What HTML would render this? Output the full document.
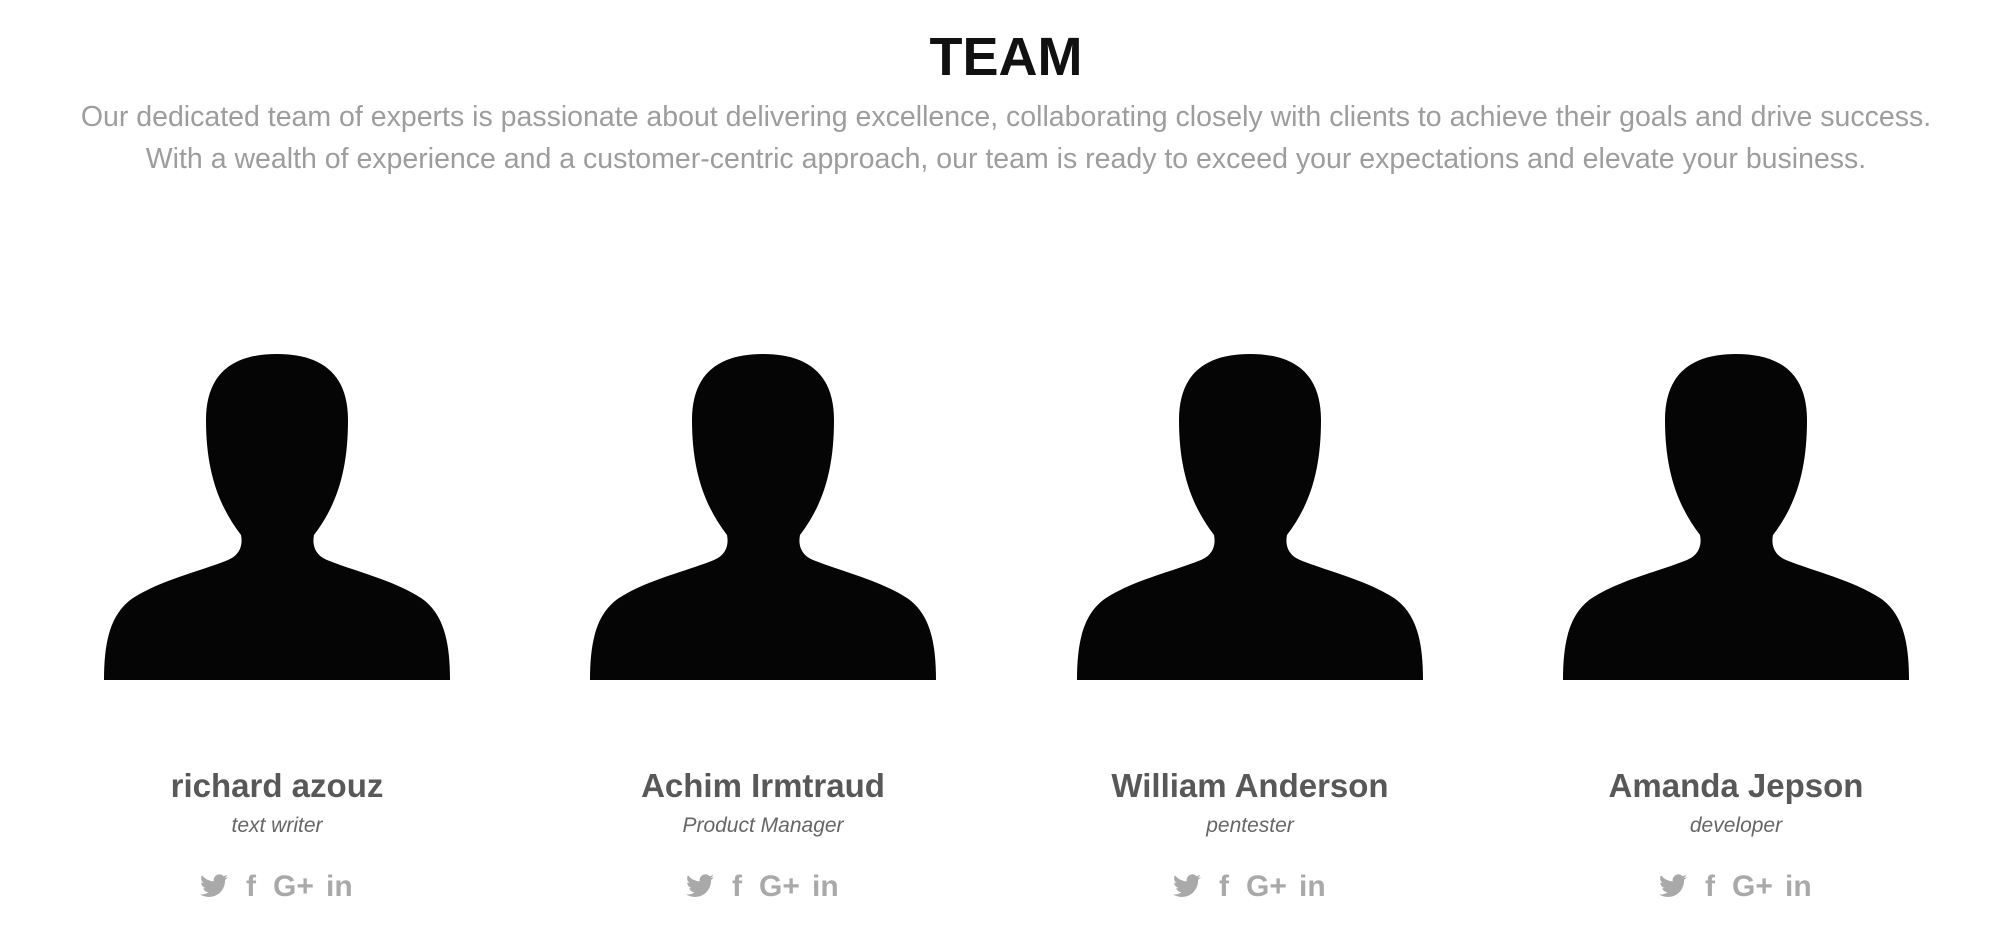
<!DOCTYPE html>
<html><head><meta charset="utf-8"><style>
html,body{margin:0;padding:0;background:#fff;width:2000px;height:946px;overflow:hidden;font-family:"Liberation Sans",sans-serif}
h1{position:absolute;top:26px;left:0;width:2012px;text-align:center;margin:0;font-size:54px;font-weight:bold;color:#111}
.p{position:absolute;top:96px;left:0;width:2012px;text-align:center;color:#9d9d9d;font-size:28.5px;line-height:42px;margin:0}
.col{position:absolute;top:330px;width:400px;text-align:center}
.col svg{display:block}
.name{position:absolute;top:437px;width:400px;text-align:center;font-weight:bold;font-size:33px;color:#585858}
.role{position:absolute;top:484px;width:400px;text-align:center;font-style:italic;font-size:21px;color:#666}
.ic{position:absolute;top:538px;left:0;width:400px;height:38px}
.ic span{position:absolute;color:#a9a9a9;font-weight:bold;font-size:30px;line-height:38px}
</style></head><body>
<h1>TEAM</h1>
<p class="p">Our dedicated team of experts is passionate about delivering excellence, collaborating closely with clients to achieve their goals and drive success.<br>With a wealth of experience and a customer-centric approach, our team is ready to exceed your expectations and elevate your business.</p>

<div class="col" style="left:77px">
<svg width="400" height="360" viewBox="0 0 400 360"><path fill="#050505" d="M200,24 C160,24 129,40 129,90 C129,140 141,175 164,205 C166,215 163,225 151,230 C121,242 84,250 56,268 C34,283 27,310 27,350 L373,350 C373,310 366,283 344,268 C316,250 280,242 250,230 C238,225 235,215 237,205 C260,175 271,140 271,90 C271,40 240,24 200,24 Z"/></svg>
<div class="name">richard azouz</div><div class="role">text writer</div>
<div class="ic"><svg style="position:absolute;left:123px;top:6px" width="28" height="24" viewBox="0 0 24 20"><path fill="#a9a9a9" d="M24 2.4a10 10 0 0 1-2.8.8A5 5 0 0 0 23.3.4a10 10 0 0 1-3.1 1.2A4.9 4.9 0 0 0 11.8 6 14 14 0 0 1 1.7.9a4.9 4.9 0 0 0 1.5 6.6A4.9 4.9 0 0 1 1 6.9a4.9 4.9 0 0 0 3.9 4.8 5 5 0 0 1-2.2.1 4.9 4.9 0 0 0 4.6 3.4A9.9 9.9 0 0 1 0 17.2 14 14 0 0 0 7.5 19.4c9.1 0 14-7.5 14-14v-.6A10 10 0 0 0 24 2.4z"/></svg><span style="left:169px">f</span><span style="left:196px">G+</span><span style="left:249px">in</span></div>
</div>

<div class="col" style="left:563px">
<svg width="400" height="360" viewBox="0 0 400 360"><path fill="#050505" d="M200,24 C160,24 129,40 129,90 C129,140 141,175 164,205 C166,215 163,225 151,230 C121,242 84,250 56,268 C34,283 27,310 27,350 L373,350 C373,310 366,283 344,268 C316,250 280,242 250,230 C238,225 235,215 237,205 C260,175 271,140 271,90 C271,40 240,24 200,24 Z"/></svg>
<div class="name">Achim Irmtraud</div><div class="role">Product Manager</div>
<div class="ic"><svg style="position:absolute;left:123px;top:6px" width="28" height="24" viewBox="0 0 24 20"><path fill="#a9a9a9" d="M24 2.4a10 10 0 0 1-2.8.8A5 5 0 0 0 23.3.4a10 10 0 0 1-3.1 1.2A4.9 4.9 0 0 0 11.8 6 14 14 0 0 1 1.7.9a4.9 4.9 0 0 0 1.5 6.6A4.9 4.9 0 0 1 1 6.9a4.9 4.9 0 0 0 3.9 4.8 5 5 0 0 1-2.2.1 4.9 4.9 0 0 0 4.6 3.4A9.9 9.9 0 0 1 0 17.2 14 14 0 0 0 7.5 19.4c9.1 0 14-7.5 14-14v-.6A10 10 0 0 0 24 2.4z"/></svg><span style="left:169px">f</span><span style="left:196px">G+</span><span style="left:249px">in</span></div>
</div>

<div class="col" style="left:1050px">
<svg width="400" height="360" viewBox="0 0 400 360"><path fill="#050505" d="M200,24 C160,24 129,40 129,90 C129,140 141,175 164,205 C166,215 163,225 151,230 C121,242 84,250 56,268 C34,283 27,310 27,350 L373,350 C373,310 366,283 344,268 C316,250 280,242 250,230 C238,225 235,215 237,205 C260,175 271,140 271,90 C271,40 240,24 200,24 Z"/></svg>
<div class="name">William Anderson</div><div class="role">pentester</div>
<div class="ic"><svg style="position:absolute;left:123px;top:6px" width="28" height="24" viewBox="0 0 24 20"><path fill="#a9a9a9" d="M24 2.4a10 10 0 0 1-2.8.8A5 5 0 0 0 23.3.4a10 10 0 0 1-3.1 1.2A4.9 4.9 0 0 0 11.8 6 14 14 0 0 1 1.7.9a4.9 4.9 0 0 0 1.5 6.6A4.9 4.9 0 0 1 1 6.9a4.9 4.9 0 0 0 3.9 4.8 5 5 0 0 1-2.2.1 4.9 4.9 0 0 0 4.6 3.4A9.9 9.9 0 0 1 0 17.2 14 14 0 0 0 7.5 19.4c9.1 0 14-7.5 14-14v-.6A10 10 0 0 0 24 2.4z"/></svg><span style="left:169px">f</span><span style="left:196px">G+</span><span style="left:249px">in</span></div>
</div>

<div class="col" style="left:1536px">
<svg width="400" height="360" viewBox="0 0 400 360"><path fill="#050505" d="M200,24 C160,24 129,40 129,90 C129,140 141,175 164,205 C166,215 163,225 151,230 C121,242 84,250 56,268 C34,283 27,310 27,350 L373,350 C373,310 366,283 344,268 C316,250 280,242 250,230 C238,225 235,215 237,205 C260,175 271,140 271,90 C271,40 240,24 200,24 Z"/></svg>
<div class="name">Amanda Jepson</div><div class="role">developer</div>
<div class="ic"><svg style="position:absolute;left:123px;top:6px" width="28" height="24" viewBox="0 0 24 20"><path fill="#a9a9a9" d="M24 2.4a10 10 0 0 1-2.8.8A5 5 0 0 0 23.3.4a10 10 0 0 1-3.1 1.2A4.9 4.9 0 0 0 11.8 6 14 14 0 0 1 1.7.9a4.9 4.9 0 0 0 1.5 6.6A4.9 4.9 0 0 1 1 6.9a4.9 4.9 0 0 0 3.9 4.8 5 5 0 0 1-2.2.1 4.9 4.9 0 0 0 4.6 3.4A9.9 9.9 0 0 1 0 17.2 14 14 0 0 0 7.5 19.4c9.1 0 14-7.5 14-14v-.6A10 10 0 0 0 24 2.4z"/></svg><span style="left:169px">f</span><span style="left:196px">G+</span><span style="left:249px">in</span></div>
</div>
</body></html>
